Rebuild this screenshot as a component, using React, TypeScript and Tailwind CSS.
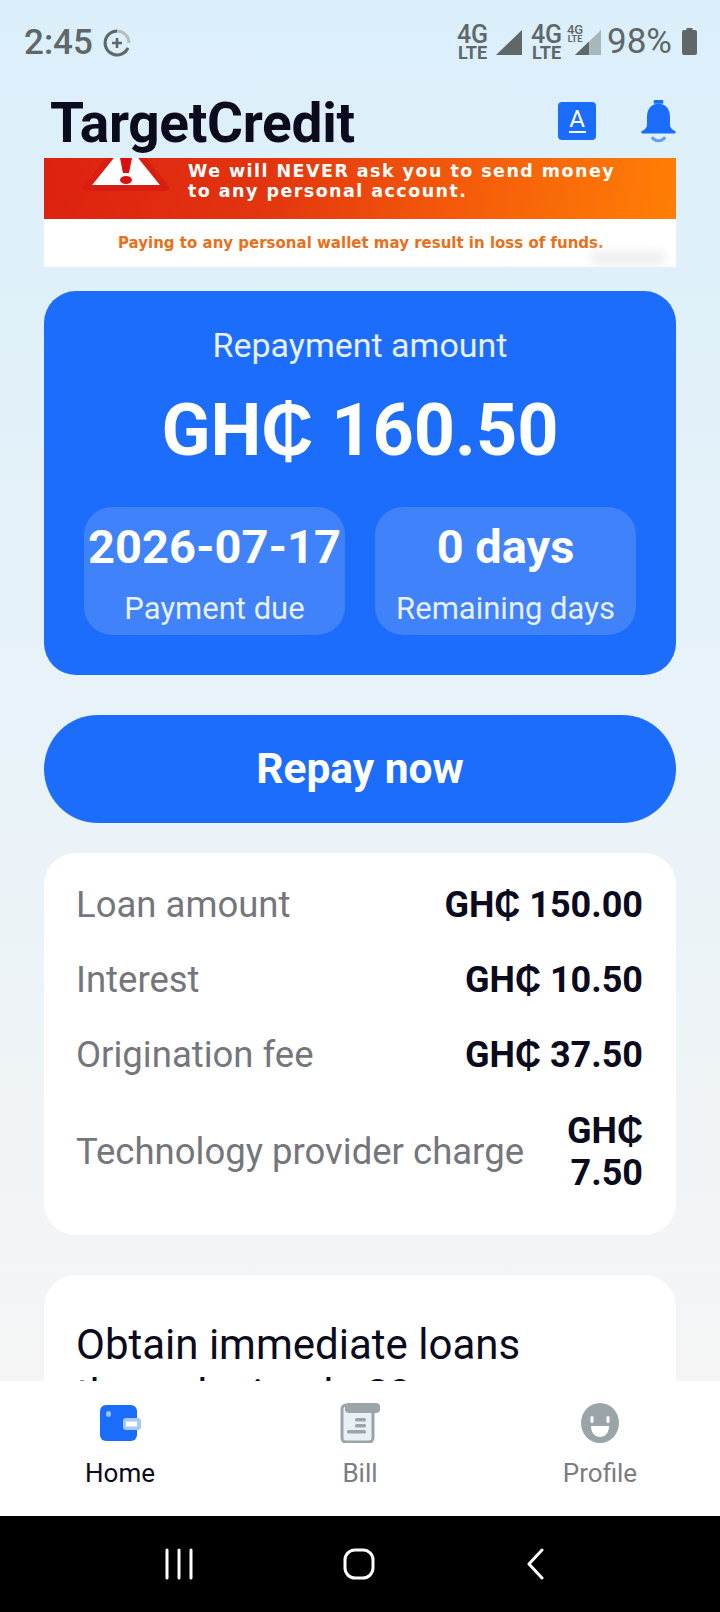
import React from "react";

const roboto = { fontFamily: "Roboto, sans-serif" };

function StatusBar() {
  return (
    <div className="flex h-[84px] shrink-0 items-start justify-between pl-[24px] pr-[23px] pt-[24px] text-[#5f6769]">
      <div className="flex items-center gap-[9px]">
        <span className="text-[35px] font-medium leading-[38px]">2:45</span>
        <svg width="30" height="30" viewBox="0 0 30 30" fill="none">
          <path d="M15 3a12 12 0 0 1 12 12" stroke="#b4c0c4" strokeWidth="3" />
          <path d="M26 20A12 12 0 1 1 15 3" stroke="#5f6769" strokeWidth="3" />
          <path d="M15 10v10M10 15h10" stroke="#5f6769" strokeWidth="2.6" />
        </svg>
      </div>
      <div className="flex items-start">
        <div className="flex w-[37px] flex-col items-center font-medium">
          <span className="text-[25px] leading-[22px]">4G</span>
          <span className="mt-[-1px] text-[18px] font-bold leading-[16px]">LTE</span>
        </div>
        <svg className="mt-[5px] ml-[4px]" width="28" height="28" viewBox="0 0 28 28"><path d="M1 26 27 1v25z" fill="#5f6769" /></svg>
        <div className="ml-[5px] flex w-[37px] flex-col items-center font-medium">
          <span className="text-[25px] leading-[22px]">4G</span>
          <span className="mt-[-1px] text-[18px] font-bold leading-[16px]">LTE</span>
        </div>
        <div className="flex w-[20px] flex-col items-center font-medium">
          <span className="text-[13px] leading-[11px]">4G</span>
          <span className="text-[9px] font-bold leading-[9px]">LTE</span>
        </div>
        <svg className="mt-[5px] ml-[-11px]" width="28" height="28" viewBox="0 0 28 28">
          <path d="M1 26 27 1v25z" fill="#a9b6ba" />
          <path d="M1 26 15 12.5V26z" fill="#5f6769" />
        </svg>
        <span className="ml-[5px] mt-[-1px] text-[35px] leading-[38px]">98%</span>
        <svg className="ml-[10px] mt-[4px]" width="15" height="27" viewBox="0 0 15 27">
          <path d="M4.500 0h6v2h2.500a2 2 0 0 1 2 2v21a2 2 0 0 1-2 2H2a2 2 0 0 1-2-2V4a2 2 0 0 1 2-2h2.500z" fill="#5f6769" />
        </svg>
      </div>
    </div>
  );
}

function Header() {
  return (
    <div className="mx-[44px] flex h-[74px] shrink-0 items-center justify-between">
      <span className="pl-[6px] pt-[5px] text-[55px] font-bold leading-[69px] tracking-[-0.3px] text-[#0c0a1d]">TargetCredit</span>
      <div className="flex items-center">
        <div className="mr-[45px] flex h-[38px] w-[38px] flex-col items-center justify-center rounded-[4px] bg-[#1a6dfb] text-white">
          <span className="text-[24px] leading-[21px]">A</span>
          <span className="mt-[1px] h-[2px] w-[17px] bg-white" />
        </div>
        <svg width="35" height="44" viewBox="0 0 36 46">
          <rect x="13" y="1" width="10" height="4" rx="1" fill="#1a6dfb" />
          <path d="M18 5C10 5 6 11 6 19v8c0 3-2 5-6 7v1a2 2 0 0 0 1 1h34a2 2 0 0 0 1-1v-1c-4-2-6-4-6-7v-8c0-8-4-14-12-14z" fill="#1a6dfb" />
          <path d="M11 40c4 5 10 5 14 0" stroke="#5f9dfc" strokeWidth="3" fill="none" />
        </svg>
      </div>
    </div>
  );
}

function Banner() {
  const wide = { fontFamily: "'DejaVu Sans', sans-serif" };
  return (
    <div className="mx-[44px] h-[109px] shrink-0 overflow-hidden bg-white" style={wide}>
      <div className="flex h-[61px] bg-[linear-gradient(100deg,#dd2110_0%,#e2350f_35%,#f45a0a_65%,#ff7f06_100%)]">
        <svg className="ml-[34px] mt-[-28px] shrink-0" width="96" height="64" viewBox="0 0 96 64">
          <path d="M48 8 88 58H8z" fill="#fff" stroke="#d81e10" strokeWidth="6" strokeLinejoin="round" />
          <path d="M42 28h12l-3 15h-6z" fill="#d81010" />
          <ellipse cx="48" cy="50" rx="6" ry="4" fill="#d81010" />
        </svg>
        <div className="ml-[14px] whitespace-nowrap pt-[3px] text-[17.5px] font-bold leading-[20px] tracking-[1.45px] text-white">
          <div>We will NEVER ask you to send money</div>
          <div>to any personal account.</div>
        </div>
      </div>
      <div className="relative flex h-[48px] items-center pl-[74px] text-[15px] font-semibold text-[#e8701a]">
        Paying to any personal wallet may result in loss of funds.
        <span className="absolute right-[10px] bottom-[2px] h-[14px] w-[76px] rounded-full bg-[#eeeeee] blur-[4px]" />
      </div>
    </div>
  );
}

function Hero() {
  return (
    <div className="mx-[44px] mt-[24px] flex h-[384px] shrink-0 flex-col items-center rounded-[32px] bg-[#1c6dfb] px-[40px] pt-[35px] text-white">
      <div className="text-[34px] leading-[38px] text-[#e8f0fe]">Repayment amount</div>
      <div className="mt-[25px] text-[72px] font-bold leading-[84px]">GH₵ 160.50</div>
      <div className="mt-[34px] grid w-full grid-cols-2 gap-[30px]">
        <Stat value="2026-07-17" label="Payment due" />
        <Stat value="0 days" label="Remaining days" />
      </div>
    </div>
  );
}

function Stat({ value, label }: { value: string; label: string }) {
  return (
    <div className="flex h-[128px] flex-col items-center rounded-[28px] bg-[#3f82fa] pt-[14px]">
      <div className="whitespace-nowrap text-[47px] font-bold leading-[52px]">{value}</div>
      <div className="mt-[18px] text-[31px] leading-[36px] text-[#e8f0fe]">{label}</div>
    </div>
  );
}

function Row({ label, value, cls }: { label: string; value: React.ReactNode; cls: string }) {
  return (
    <div className={`flex items-center justify-between ${cls}`}>
      <span className="text-[36.500px] leading-[40px] text-[#75767c]">{label}</span>
      <span className="text-right text-[36px] font-bold leading-[42px] text-[#0c0a1d]">{value}</span>
    </div>
  );
}

function Details() {
  return (
    <div className="mx-[44px] mt-[30px] h-[382px] shrink-0 rounded-[32px] bg-white pl-[32px] pr-[33px] pt-[32px]">
      <Row label="Loan amount" value="GH₵ 150.00" cls="h-[40px]" />
      <Row label="Interest" value="GH₵ 10.50" cls="mt-[35px] h-[40px]" />
      <Row label="Origination fee" value="GH₵ 37.50" cls="mt-[35px] h-[40px]" />
      <Row label="Technology provider charge" value={<>GH₵<br />7.50</>} cls="mt-[35px] h-[84px]" />
    </div>
  );
}

function NavItem({ label, cls, children }: { label: string; cls: string; children: React.ReactNode }) {
  return (
    <div className="flex w-[240px] flex-col items-center pt-[22px]">
      <div className="flex h-[40px] items-center justify-center">{children}</div>
      <span className={`mt-[14px] text-[26px] leading-[32px] ${cls}`}>{label}</span>
    </div>
  );
}

function BottomNav() {
  return (
    <div className="flex h-[135px] shrink-0 bg-white">
      <NavItem label="Home" cls="text-[#0c0a1d]">
        <svg width="42" height="38" viewBox="0 0 42 38">
          <rect x="1" y="1" width="37" height="36" rx="6" fill="#1a6dfb" />
          <ellipse cx="9.500" cy="10" rx="2.500" ry="3" fill="#9cc0fd" />
          <rect x="24" y="14" width="18" height="12" rx="3" fill="#a9c9fd" />
          <rect x="27" y="17.500" width="11" height="5" fill="#fff" />
        </svg>
      </NavItem>
      <NavItem label="Bill" cls="text-[#7b7c80]">
        <svg width="40" height="40" viewBox="0 0 40 40">
          <rect x="2" y="2" width="31" height="37" rx="4" fill="#e9f0f5" stroke="#9aa5a9" strokeWidth="3" />
          <rect x="5" y="0" width="35" height="10" rx="4" fill="#9aa5a9" />
          <rect x="15" y="15" width="11" height="3.500" rx="1.500" fill="#9aa5a9" />
          <rect x="15" y="21" width="11" height="3.500" rx="1.500" fill="#9aa5a9" />
          <rect x="7" y="27" width="19" height="3.500" rx="1.500" fill="#9aa5a9" />
        </svg>
      </NavItem>
      <NavItem label="Profile" cls="text-[#7b7c80]">
        <svg width="38" height="40" viewBox="0 0 38 40">
          <ellipse cx="19" cy="20" rx="19" ry="20" fill="#9aa5a9" />
          <rect x="9.500" y="13" width="3" height="7" rx="1.500" fill="#fff" />
          <rect x="25.500" y="13" width="3" height="7" rx="1.500" fill="#fff" />
          <path d="M10 23h18c0 7-4 11-9 11s-9-4-9-11z" fill="#fff" />
        </svg>
      </NavItem>
    </div>
  );
}

function SystemNav() {
  return (
    <div className="flex h-[96px] shrink-0 items-start bg-black pt-[32px]">
      <svg className="ml-[164px]" width="32" height="32" viewBox="0 0 32 32" fill="none" stroke="#fff" strokeWidth="3" strokeLinecap="round">
        <path d="M3 2v28M15 2v28M27 2v28" />
      </svg>
      <svg className="ml-[147px]" width="32" height="32" viewBox="0 0 32 32" fill="none" stroke="#fff" strokeWidth="3">
        <rect x="2" y="2" width="28" height="28" rx="10" />
      </svg>
      <svg className="ml-[150px]" width="22" height="32" viewBox="0 0 22 32" fill="none" stroke="#fff" strokeWidth="3" strokeLinecap="round" strokeLinejoin="round">
        <path d="M17 2 4 16l13 14" />
      </svg>
    </div>
  );
}

export default function App() {
  return (
    <div className="flex h-[1612px] w-[720px] flex-col overflow-hidden" style={roboto}>
      <div className="flex min-h-0 flex-1 flex-col overflow-hidden bg-[linear-gradient(180deg,#dbeffa_0%,#e6f2f9_45%,#f5f5f5_100%)]">
        <StatusBar />
        <Header />
        <Banner />
        <Hero />
        <div className="mx-[44px] mt-[40px] flex h-[108px] shrink-0 items-center justify-center rounded-full bg-[#1c6dfb] text-[42.500px] font-bold text-white">Repay now</div>
        <Details />
        <div className="mx-[44px] mt-[40px] shrink-0 rounded-t-[32px] bg-white pl-[32px] pr-[33px] pt-[45px] text-[42px] leading-[50px] text-[#0c0a1d]">
          Obtain immediate loans<br />through simple 3?
        </div>
      </div>
      <BottomNav />
      <SystemNav />
    </div>
  );
}
